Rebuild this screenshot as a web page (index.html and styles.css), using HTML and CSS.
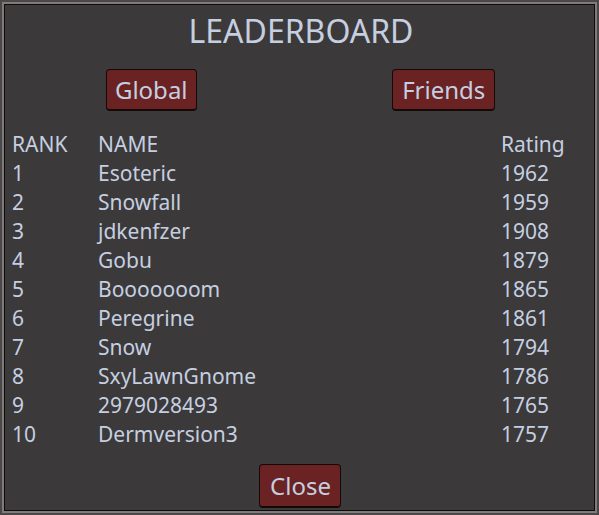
FILE: index.html
```html
<!DOCTYPE html>
<html>
<head>
<meta charset="utf-8">
<link rel="stylesheet" href="styles.css">
</head>
<body>
<div class="panel">
  <h1 class="title">LEADERBOARD</h1>
  <div class="tabs">
    <button class="btn">Global</button>
    <button class="btn wide">Friends</button>
  </div>
  <div class="table">
    <div class="row head"><span>RANK</span><span>NAME</span><span>Rating</span></div>
    <div class="row"><span>1</span><span>Esoteric</span><span>1962</span></div>
    <div class="row"><span>2</span><span>Snowfall</span><span>1959</span></div>
    <div class="row"><span>3</span><span>jdkenfzer</span><span>1908</span></div>
    <div class="row"><span>4</span><span>Gobu</span><span>1879</span></div>
    <div class="row"><span>5</span><span>Booooooom</span><span>1865</span></div>
    <div class="row"><span>6</span><span>Peregrine</span><span>1861</span></div>
    <div class="row"><span>7</span><span>Snow</span><span>1794</span></div>
    <div class="row"><span>8</span><span>SxyLawnGnome</span><span>1786</span></div>
    <div class="row"><span>9</span><span>2979028493</span><span>1765</span></div>
    <div class="row"><span>10</span><span>Dermversion3</span><span>1757</span></div>
  </div>
  <div class="footer">
    <button class="btn close">Close</button>
  </div>
</div>
</body>
</html>
```
FILE: styles.css
```css
html, body {
  margin: 0;
  padding: 0;
  background: #3b393a;
}

.panel {
  box-sizing: border-box;
  width: 599px;
  height: 515px;
  background: #3b393a;
  border: 2px solid #4b4647;
  box-shadow: inset 0 0 0 2px #807a78, inset 0 0 0 3px #0e0d0d;
  padding: 5px 7px 0 10px;
  font-family: "Noto Sans", sans-serif;
  color: #c5cfe0;
  display: flex;
  flex-direction: column;
}

.title {
  margin: 2px 0 0 0;
  font-size: 32px;
  font-weight: normal;
  line-height: 44px;
  text-align: center;
}

.tabs {
  display: grid;
  grid-template-columns: 1fr 1fr;
  justify-items: center;
  margin: 16px -7px 0 -7px;
  padding-right: 7px;
}

.btn {
  box-sizing: border-box;
  height: 42px;
  padding: 0 8px;
  font-family: "Noto Sans", sans-serif;
  font-size: 24px;
  line-height: 32px;
  color: #c5cfe0;
  background: #6b2222;
  border: 1px solid #140808;
  border-bottom-width: 2px;
  border-radius: 4px;
}

.btn.wide {
  padding: 0 9px;
}

.table {
  margin-top: 19px;
  font-size: 21px;
  line-height: 29px;
}

.row {
  display: grid;
  grid-template-columns: 86px 1fr 89px;
}

.footer {
  display: flex;
  justify-content: center;
  margin-top: 15px;
}

.btn.close {
  height: 44px;
  padding: 0 9px 0 10px;
  margin-left: -2px;
}
```
